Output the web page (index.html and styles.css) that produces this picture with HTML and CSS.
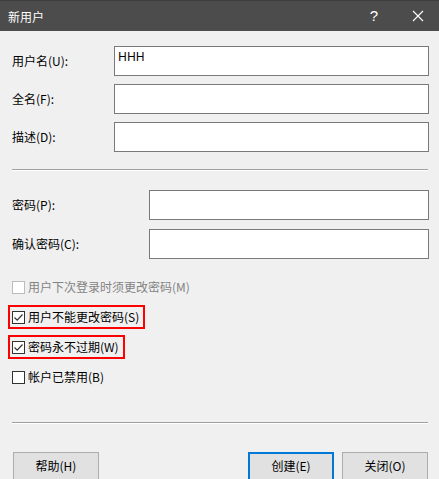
FILE: index.html
```html
<!DOCTYPE html>
<html lang="zh-CN">
<head>
<meta charset="utf-8">
<title>新用户</title>
<link rel="stylesheet" href="styles.css">
</head>
<body>
<div class="window">
  <div class="titlebar">
    <div class="title">新用户</div>
    <div class="tb-help">?</div>
    <div class="tb-close">
      <svg width="12" height="12" viewBox="0 0 12 12"><path d="M1 1 L11 11 M11 1 L1 11" stroke="#fff" stroke-width="1.1" fill="none"/></svg>
    </div>
  </div>
  <div class="content">
    <div class="form-group">
      <div class="label">用户名(U):</div>
      <div class="field">HHH</div>
      <div class="label">全名(F):</div>
      <div class="field"></div>
      <div class="label">描述(D):</div>
      <div class="field"></div>
    </div>
    <div class="separator sep1"></div>
    <div class="form-group pw">
      <div class="label">密码(P):</div>
      <div class="field"></div>
      <div class="label">确认密码(C):</div>
      <div class="field"></div>
    </div>
    <div class="checks">
      <div class="check disabled"><span class="box"></span><span class="ctext">用户下次登录时须更改密码(M)</span></div>
      <div class="check marked"><span class="box"><svg width="11" height="11" viewBox="0 0 11 11"><path d="M1.5 5.5 L4.2 8.2 L9.5 2.5" stroke="#333" stroke-width="1.2" fill="none"/></svg></span><span class="ctext">用户不能更改密码(S)</span></div>
      <div class="check marked"><span class="box"><svg width="11" height="11" viewBox="0 0 11 11"><path d="M1.5 5.5 L4.2 8.2 L9.5 2.5" stroke="#333" stroke-width="1.2" fill="none"/></svg></span><span class="ctext">密码永不过期(W)</span></div>
      <div class="check"><span class="box"></span><span class="ctext">帐户已禁用(B)</span></div>
    </div>
    <div class="separator sep2"></div>
    <div class="buttons">
      <div class="btn">帮助(H)</div>
      <div class="spacer"></div>
      <div class="btn default">创建(E)</div>
      <div class="btn">关闭(O)</div>
    </div>
  </div>
</div>
</body>
</html>
```
FILE: styles.css
```css
html, body {
  margin: 0;
  padding: 0;
}
body {
  width: 439px;
  height: 479px;
  overflow: hidden;
  background: #f0f0f0;
  font-family: "Noto Sans CJK SC", "Noto Sans", sans-serif;
  font-size: 12px;
  color: #000;
}
.window {
  width: 439px;
  height: 479px;
  overflow: hidden;
}
.titlebar {
  height: 31px;
  background: #4c4c4c;
  color: #fff;
  display: flex;
  align-items: center;
  box-sizing: border-box;
  border-top: 1px solid #3e3e3e;
}
.title {
  flex: 1;
  padding-left: 8px;
  font-size: 12px;
}
.tb-help {
  width: 46px;
  text-align: center;
  font-family: "Liberation Sans", sans-serif;
  font-size: 15px;
  line-height: 18px;
}
.tb-close {
  width: 42px;
  display: flex;
  justify-content: center;
  align-items: center;
}
.content {
  padding: 15px 10px 0 12px;
}
.form-group {
  display: grid;
  grid-template-columns: 102px 1fr;
  row-gap: 8px;
  align-items: center;
}
.form-group.pw {
  grid-template-columns: 137px 1fr;
  row-gap: 9px;
  margin-top: 19px;
}
.label {
  line-height: 16px;
}
.field {
  height: 30px;
  box-sizing: border-box;
  border: 1px solid #7a7a7a;
  background: #fff;
  padding: 2px 3px;
  line-height: 16px;
  font-family: "Noto Sans", sans-serif;
  font-size: 12px;
}
.separator {
  height: 1px;
  background: #a0a0a0;
  border-bottom: 1px solid #fff;
  margin-right: 1px;
}
.sep1 {
  margin-top: 17px;
}
.sep2 {
  margin-top: 33px;
}
.checks {
  margin-top: 16px;
  display: flex;
  flex-direction: column;
  align-items: flex-start;
  gap: 6px;
}
.check {
  height: 24px;
  display: flex;
  align-items: center;
  box-sizing: border-box;
}
.check.marked {
  border: 2px solid #ff0000;
  margin-left: -4px;
  padding: 0 4px 0 2px;
}
.box {
  width: 13px;
  height: 13px;
  box-sizing: border-box;
  border: 1px solid #333;
  background: #fff;
  display: flex;
  align-items: center;
  justify-content: center;
  margin-right: 3px;
}
.check.disabled .box {
  border-color: #bcbcbc;
}
.check.disabled .ctext {
  color: #838383;
}
.ctext {
  line-height: 16px;
}
.buttons {
  margin-top: 28px;
  display: flex;
  gap: 8px;
  padding-left: 1px;
  margin-right: 1px;
}
.spacer {
  flex: 1;
}
.btn {
  width: 86px;
  height: 30px;
  box-sizing: border-box;
  border: 1px solid #adadad;
  background: #e1e1e1;
  display: flex;
  justify-content: center;
  padding-top: 5px;
  line-height: 16px;
}
.btn.default {
  border: 2px solid #0078d7;
  padding-top: 4px;
}
```
